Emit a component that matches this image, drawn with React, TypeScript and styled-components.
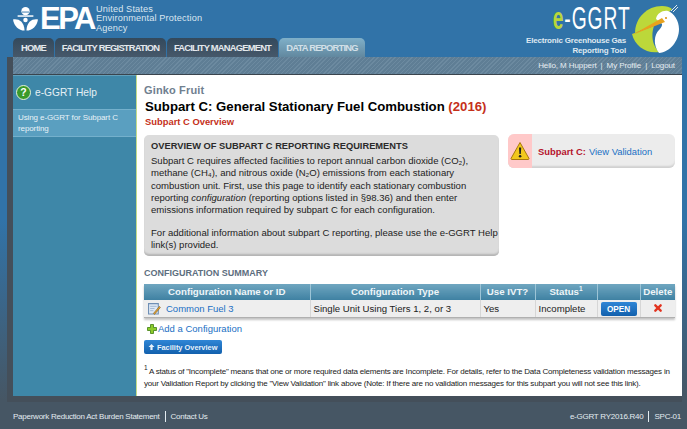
import React, { FunctionComponent } from 'react';

import styled, { createGlobalStyle } from 'styled-components';

const GlobalStyle = createGlobalStyle`
  html, body {
    margin: 0;
    padding: 0;
    width: 687px;
    height: 429px;
    overflow: hidden;
  }
  body {
    background: linear-gradient(#3173a8 0, #3173a8 220px, #465664 400px);
    font-family: "Liberation Sans", Arial, sans-serif;
    font-size: 10px;
    color: #222;
  }
  a { text-decoration: none; color: #1a6fc4; }
`;

const Header = styled.header`
  display: flex;
  justify-content: space-between;
  height: 57px;
  padding: 0 5px 0 13px;
`;

const HeaderLeft = styled.div`
  display: flex;
  flex-direction: column;
  justify-content: space-between;
`;

const EpaLogo = styled.div`
  display: flex;
  align-items: center;
  height: 34px;
  padding-top: 2px;
  color: #fff;
`;

const EpaWord = styled.span`
  font-size: 31px;
  font-weight: bold;
  letter-spacing: -2.5px;
  margin: 0 2px 0 2px;
  line-height: 30px;
`;

const EpaName = styled.span`
  font-size: 9.2px;
  line-height: 9.5px;
  color: #dbe6f0;
  letter-spacing: 0.15px;
`;

const Tabs = styled.nav`
  display: flex;
  gap: 1px;
`;

const Tab = styled.a<{ $active?: boolean; $width: number }>`
  width: ${(p) => p.$width}px;
  height: 19px;
  display: flex;
  align-items: center;
  justify-content: center;
  white-space: nowrap;
  border-radius: 5px 5px 0 0;
  font-size: 9.4px;
  letter-spacing: -0.8px;
  font-weight: bold;
  color: ${(p) => (p.$active ? '#d3e0e8' : '#e4e8ec')};
  background: ${(p) =>
    p.$active
      ? 'linear-gradient(#7fb0c9, #62889f)'
      : 'linear-gradient(#33495c, #46586a)'};
`;

const GgrtLogo = styled.div`
  display: flex;
  gap: 6px;
  padding: 5px 2px 0 0;
`;

const GgrtText = styled.div`
  display: flex;
  flex-direction: column;
  align-items: flex-end;
  color: #dfe8f0;
  font-weight: bold;
`;

const GgrtTitle = styled.div`
  font-size: 31px;
  line-height: 28px;
  height: 28px;
  letter-spacing: 1.5px;
  font-weight: normal;
  color: #fff;
  transform: scaleX(0.62);
  transform-origin: right center;
  margin: 0 -5px 3px 0;
  white-space: nowrap;
`;

const GgrtE = styled.span`
  color: #b9d63b;
  font-weight: bold;
`;

const GgrtTagline = styled.div`
  font-size: 8px;
  line-height: 10px;
  letter-spacing: -0.2px;
  text-align: right;
  white-space: nowrap;
`;

const Frame = styled.div`
  margin: 0 5px 0 7px;
  padding: 0 0 6px 6px;
  background: #444f5a;
`;

const UserBar = styled.div`
  height: 17px;
  border-bottom: 1px solid #3a444d;
  display: flex;
  align-items: center;
  justify-content: flex-end;
  gap: 4px;
  padding-right: 7px;
  font-size: 8px;
  letter-spacing: -0.1px;
  color: #e6edf2;
  background: repeating-linear-gradient(135deg, #6c8aa0 0 1px, #5f7e95 1px 3px);
`;

const Divider = styled.span`
  color: #e6edf2;
`;

const Main = styled.div`
  display: flex;
  height: 321px;
`;

const Sidebar = styled.aside`
  width: 123px;
  flex: none;
  background: #3e87a8;
  border-top: 1px solid #62a0bb;
  box-sizing: border-box;
`;

const HelpTitle = styled.div`
  height: 33px;
  display: flex;
  align-items: center;
  gap: 4px;
  padding-left: 3px;
  font-size: 10.2px;
  color: #e6f0f5;
`;

const HelpItem = styled.a`
  display: block;
  box-sizing: border-box;
  height: 28px;
  padding: 2px 4px 0 5px;
  background: #5a9fc0;
  border-top: 1px solid #74b0cc;
  border-bottom: 1px solid #74b0cc;
  font-size: 8px;
  letter-spacing: -0.1px;
  line-height: 11px;
  color: #e8f2f7;
`;

const Content = styled.main`
  flex: 1;
  background: #fff;
  border-left: 1px solid #c3dc8a;
  padding: 9px 7px 0 7px;
  min-width: 0;
`;

const Facility = styled.div`
  font-size: 11px;
  font-weight: bold;
  line-height: 12px;
  letter-spacing: 0.15px;
  color: #70808f;
`;

const PageTitle = styled.h1`
  margin: 2px 0 0 1px;
  font-size: 13.2px;
  line-height: 17px;
  font-weight: bold;
  color: #000;
`;

const Year = styled.span`
  color: #c5301a;
`;

const SubTitle = styled.div`
  margin: 1px 0 0 1px;
  font-size: 9.4px;
  line-height: 11px;
  font-weight: bold;
  color: #c5301a;
`;

const TopRow = styled.div`
  display: flex;
  align-items: flex-start;
  gap: 9px;
  margin-top: 8px;
`;

const Overview = styled.section`
  box-sizing: border-box;
  width: 355px;
  height: 121px;
  padding: 5px 0 0 7px;
  border-radius: 5px;
  background: #dcdcdc;
  box-shadow: inset 0 -3px 2px -1px #b4b4b4;
  font-size: 9.55px;
  line-height: 12.35px;
`;

const OverviewTitle = styled.h2`
  margin: 0 0 3px;
  font-size: 9.3px;
  line-height: 12px;
  font-weight: bold;
  color: #2b2b2b;
`;

const Paragraph = styled.p`
  margin: 0 0 10px;
`;

const Warning = styled.aside`
  flex: 1;
  height: 34px;
  margin-top: -1px;
  display: flex;
  align-items: center;
  border-radius: 6px;
  overflow: hidden;
  background: #ececec;
  box-shadow: inset 0 -3px 2px -1px #d0d0d0;
  font-size: 9.4px;
`;

const WarningIcon = styled.div`
  width: 24px;
  height: 100%;
  flex: none;
  display: flex;
  align-items: center;
  justify-content: center;
  background: #ffc9c9;
  margin-right: 6px;
`;

const WarningLabel = styled.strong`
  color: #b5142c;
  margin-right: 3px;
`;

const SectionTitle = styled.h3`
  margin: 12px 0 5px;
  font-size: 9px;
  line-height: 11px;
  font-weight: bold;
  color: #5d6e7e;
`;

const Table = styled.table`
  width: 531px;
  border-collapse: collapse;
  table-layout: fixed;
  box-shadow: 0 2px 2px #c4c4c4;
`;

const Th = styled.th<{ $width: number }>`
  box-sizing: border-box;
  width: ${(p) => p.$width}px;
  height: 16px;
  padding: 0;
  font-size: 9.7px;
  line-height: 12px;
  font-weight: bold;
  color: #eef5f8;
  background: linear-gradient(#6fa6c0, #3f81a2);
  border-left: 1px solid #9cc4d6;
  &:first-child { border-left: 0; }
`;

const Sup = styled.sup`
  font-size: 6.5px;
  line-height: 0;
`;

const Td = styled.td<{ $center?: boolean }>`
  height: 17px;
  padding: 0 3px;
  background: #eeeeee;
  border-left: 1px solid #d6d6d6;
  border-bottom: 1px solid #b0b0b0;
  font-size: 9.6px;
  line-height: 12px;
  color: #222;
  text-align: ${(p) => (p.$center ? 'center' : 'left')};
  &:first-child { border-left: 0; }
`;

const ConfigName = styled.div`
  display: flex;
  align-items: center;
  gap: 5px;
  padding-left: 1px;
  font-size: 9.5px;
`;

const OpenButton = styled.a`
  display: block;
  width: 36px;
  height: 14px;
  margin: 1px auto 0;
  line-height: 15px;
  text-align: center;
  border-radius: 2px;
  font-size: 8.2px;
  font-weight: bold;
  color: #fff;
  background: linear-gradient(#2f86d6, #1260ad);
`;

const AddLink = styled.a`
  display: flex;
  align-items: center;
  gap: 1px;
  margin: 5px 0 0 3px;
  font-size: 9.5px;
  line-height: 12px;
`;

const BackButton = styled.a`
  display: flex;
  align-items: center;
  gap: 2px;
  box-sizing: border-box;
  width: 78px;
  height: 14px;
  margin-top: 5px;
  padding-left: 4px;
  border-radius: 2px;
  font-size: 7.4px;
  font-weight: bold;
  white-space: nowrap;
  color: #e8f2fb;
  background: linear-gradient(#2f86d6, #1260ad);
`;

const Footnote = styled.p`
  margin: 12px 0 0;
  font-size: 8px;
  letter-spacing: -0.2px;
  line-height: 12.4px;
  color: #222;
`;

const Footer = styled.footer`
  display: flex;
  justify-content: space-between;
  align-items: center;
  height: 27px;
  padding: 1px 6px 0 13px;
  font-size: 8px;
  letter-spacing: -0.25px;
  color: #e3ebf0;
`;

const FooterGroup = styled.div`
  display: flex;
  align-items: center;
`;

const FooterItem = styled.span`
  padding: 0 5px;
  border-left: 1px solid #e3ebf0;
  line-height: 11px;
  &:first-child { border-left: 0; padding-left: 0; }
  &:last-child { padding-right: 0; }
`;

const EpaEmblem = () => (
  <svg width="25" height="26" viewBox="0 0 27 27">
    <circle cx="13.5" cy="5" r="4.5" fill="#fff" />
    <path d="M5 9.5h17v1.6H5z" fill="#fff" />
    <path d="M9.5 6h8" stroke="#3173a8" strokeWidth="1" />
    <path d="M0 14c6-1 12 2 12.5 12C6 26 1 21 0 14z" fill="#fff" />
    <path d="M27 14c-6-1-12 2-12.5 12C21 26 26 21 27 14z" fill="#fff" />
    <circle cx="13.5" cy="14.5" r="2.4" fill="#fff" />
  </svg>
);

const BirdLogo = () => (
  <svg width="48" height="48" viewBox="0 0 48 48">
    <path d="M3 28C3 13 15 1 30 1c4 0 8 1 10 3L26 18z" fill="#bcd83a" />
    <path d="M0 29l22-8c-3 9-2 19 5 26C14 49 3 41 0 29z" fill="#bcd83a" />
    <path d="M24 14c1-6 7-9 12-8 6 2 11 10 11 18 0 12-9 23-20 24-6-8-5-18 0-23 3-3 4-6 2-7z" fill="#fff" />
    <path d="M30 13l3 4L0 30z" fill="#e8a21c" />
    <circle cx="34" cy="13" r="1" fill="#d88a10" />
    <path d="M39 6l6-6M41 7l5-5" stroke="#dfe8f0" strokeWidth="1" />
  </svg>
);

const HelpIcon = () => (
  <svg width="15" height="15" viewBox="0 0 15 15">
    <circle cx="7.5" cy="7.5" r="7" fill="#3a9a2a" stroke="#e6f2d8" strokeWidth="1" />
    <text x="7.5" y="11.2" textAnchor="middle" fontSize="10.5" fontWeight="bold" fontFamily="Liberation Sans" fill="#fff">?</text>
  </svg>
);

const WarningTriangle = () => (
  <svg width="20" height="20" viewBox="0 0 20 20">
    <path d="M10 1.5 19 17.5Q19 18.5 18 18.5H2Q1 18.5 1 17.5z" fill="#f2c81e" stroke="#a8780e" strokeWidth="1" strokeLinejoin="round" />
    <path d="M9 6.5h2.2l-.4 6.5H9.4z" fill="#222" />
    <circle cx="10.1" cy="15.3" r="1.3" fill="#222" />
  </svg>
);

const EditIcon = () => (
  <svg width="13" height="13" viewBox="0 0 12 12">
    <path d="M.5 1.5h9v9.5h-9z" fill="#dfe9f5" stroke="#6f8fb5" strokeWidth="1" />
    <path d="M2 4h6M2 6h4M2 8h3" stroke="#9db3cf" strokeWidth=".8" />
    <path d="M5 10.5 10.5 4l1 1L6 11.5z" fill="#e0a030" stroke="#7a5a20" strokeWidth=".5" />
  </svg>
);

const PlusIcon = () => (
  <svg width="10" height="10" viewBox="0 0 10 10">
    <path d="M3.5.5h3v3h3v3h-3v3h-3v-3h-3v-3h3z" fill="#8ccb2a" stroke="#3f7d12" strokeWidth=".8" />
  </svg>
);

const DeleteIcon = () => (
  <svg width="8" height="8" viewBox="0 0 9 9">
    <path d="M1.5 1.5l6 6M7.5 1.5l-6 6" stroke="#e2331f" strokeWidth="2.6" strokeLinecap="round" />
  </svg>
);

const UpArrow = () => (
  <svg width="7" height="8" viewBox="0 0 7 8">
    <path d="M3.5 1 6.5 4H4.6v3H2.4V4H.5z" fill="#e8f2fb" />
  </svg>
);

const columns = [
  { label: 'Configuration Name or ID', width: 166 },
  { label: 'Configuration Type', width: 170 },
  { label: 'Use IVT?', width: 55 },
  { label: 'Status', width: 62, note: true },
  { label: '', width: 43 },
  { label: 'Delete', width: 35 },
];

const App: FunctionComponent = () => {
  return (
    <>
      <GlobalStyle />
      <Header>
        <HeaderLeft>
          <EpaLogo>
            <EpaEmblem />
            <EpaWord>EPA</EpaWord>
            <EpaName>
              United States
              <br />
              Environmental Protection
              <br />
              Agency
            </EpaName>
          </EpaLogo>
          <Tabs>
            <Tab $width={41}>HOME</Tab>
            <Tab $width={111}>FACILITY REGISTRATION</Tab>
            <Tab $width={111}>FACILITY MANAGEMENT</Tab>
            <Tab $width={86} $active>
              DATA REPORTING
            </Tab>
          </Tabs>
        </HeaderLeft>
        <GgrtLogo>
          <GgrtText>
            <GgrtTitle>
              <GgrtE>e</GgrtE>-GGRT
            </GgrtTitle>
            <GgrtTagline>
              Electronic Greenhouse Gas
              <br />
              Reporting Tool
            </GgrtTagline>
          </GgrtText>
          <BirdLogo />
        </GgrtLogo>
      </Header>
      <Frame>
        <UserBar>
          <span>Hello, M Huppert</span>
          <Divider>|</Divider>
          <span>My Profile</span>
          <Divider>|</Divider>
          <span>Logout</span>
        </UserBar>
        <Main>
          <Sidebar>
            <HelpTitle>
              <HelpIcon />
              e-GGRT Help
            </HelpTitle>
            <HelpItem>Using e-GGRT for Subpart C reporting</HelpItem>
          </Sidebar>
          <Content>
            <Facility>Ginko Fruit</Facility>
            <PageTitle>
              Subpart C: General Stationary Fuel Combustion <Year>(2016)</Year>
            </PageTitle>
            <SubTitle>Subpart C Overview</SubTitle>
            <TopRow>
              <Overview>
                <OverviewTitle>OVERVIEW OF SUBPART C REPORTING REQUIREMENTS</OverviewTitle>
                <Paragraph>
                  Subpart C requires affected facilities to report annual carbon dioxide (CO₂),
                  <br />
                  methane (CH₄), and nitrous oxide (N₂O) emissions from each stationary
                  <br />
                  combustion unit. First, use this page to identify each stationary combustion
                  <br />
                  reporting <em>configuration</em> (reporting options listed in §98.36) and then enter
                  <br />
                  emissions information required by subpart C for each configuration.
                </Paragraph>
                <Paragraph>
                  For additional information about subpart C reporting, please use the e-GGRT Help
                  <br />
                  link(s) provided.
                </Paragraph>
              </Overview>
              <Warning>
                <WarningIcon>
                  <WarningTriangle />
                </WarningIcon>
                <WarningLabel>Subpart C:</WarningLabel>
                <a>View Validation</a>
              </Warning>
            </TopRow>
            <SectionTitle>CONFIGURATION SUMMARY</SectionTitle>
            <Table>
              <thead>
                <tr>
                  {columns.map((col) => (
                    <Th key={col.label} $width={col.width}>
                      {col.label}
                      {col.note && <Sup>1</Sup>}
                    </Th>
                  ))}
                </tr>
              </thead>
              <tbody>
                <tr>
                  <Td>
                    <ConfigName>
                      <EditIcon />
                      <a>Common Fuel 3</a>
                    </ConfigName>
                  </Td>
                  <Td>Single Unit Using Tiers 1, 2, or 3</Td>
                  <Td>Yes</Td>
                  <Td>Incomplete</Td>
                  <Td $center>
                    <OpenButton>OPEN</OpenButton>
                  </Td>
                  <Td $center>
                    <DeleteIcon />
                  </Td>
                </tr>
              </tbody>
            </Table>
            <AddLink>
              <PlusIcon />
              Add a Configuration
            </AddLink>
            <BackButton>
              <UpArrow />
              Facility Overview
            </BackButton>
            <Footnote>
              <Sup>1</Sup> A status of "Incomplete" means that one or more required data elements
              are Incomplete. For details, refer to the Data Completeness validation messages in
              your Validation Report by clicking the "View Validation" link above (Note: If there
              are no validation messages for this subpart you will not see this link).
            </Footnote>
          </Content>
        </Main>
      </Frame>
      <Footer>
        <FooterGroup>
          <FooterItem>Paperwork Reduction Act Burden Statement</FooterItem>
          <FooterItem>Contact Us</FooterItem>
        </FooterGroup>
        <FooterGroup>
          <FooterItem>e-GGRT RY2016.R40</FooterItem>
          <FooterItem>SPC-01</FooterItem>
        </FooterGroup>
      </Footer>
    </>
  );
};

export default App;
